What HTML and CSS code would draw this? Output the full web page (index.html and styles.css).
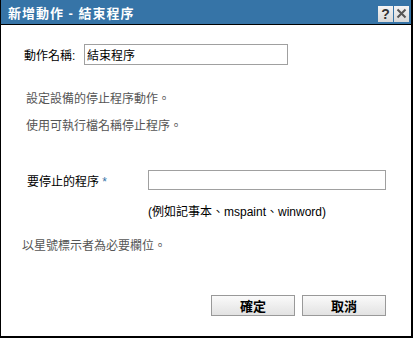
FILE: index.html
```html
<!DOCTYPE html>
<html lang="zh-Hant">
<head>
  <meta charset="UTF-8">
  <title>新增動作 - 結束程序</title>
  <link rel="stylesheet" href="styles.css">
</head>
<body>
  <div class="dialog">
    <div class="title-bar">
      <span class="title">新增動作 - 結束程序</span>
      <div class="title-btns">
        <span class="tbtn">?</span>
        <span class="tbtn">
          <svg width="11" height="11" viewBox="0 0 11 11"><path d="M1.5 1.5 L9.5 9.5 M9.5 1.5 L1.5 9.5" stroke="#555" stroke-width="2"/></svg>
        </span>
      </div>
    </div>

    <div class="content">
      <div class="name-row">
        <label for="actionName">動作名稱:</label>
        <input type="text" id="actionName" value="結束程序">
      </div>

      <p class="desc">設定設備的停止程序動作。</p>
      <p class="desc second">使用可執行檔名稱停止程序。</p>

      <div class="proc-row">
        <label for="procName">要停止的程序 <span class="req">*</span></label>
        <input type="text" id="procName">
      </div>
      <div class="hint">(例如記事本、mspaint、winword)</div>

      <p class="note">以星號標示者為必要欄位。</p>

      <div class="actions">
        <button class="btn">確定</button>
        <button class="btn">取消</button>
      </div>
    </div>
  </div>
</body>
</html>
```

FILE: styles.css
```css
/* General styling */
body {
  margin: 0;
  font-family: "Liberation Sans", "Noto Sans CJK TC", sans-serif;
  font-size: 12px;
  color: #000;
  background: #fff;
}
.dialog {
  width: 410px;
  height: 336px;
  border-left: 1px solid #000;
  border-right: 2px solid #000;
  border-bottom: 2px solid #000;
  display: flex;
  flex-direction: column;
}
.title-bar {
  height: 24px;
  background-color: #3674a7;
  border-bottom: 1px solid #000;
  display: flex;
  align-items: center;
  justify-content: space-between;
  padding: 0 2px 0 7px;
}
.title {
  color: #fff;
  font-weight: bold;
  font-size: 13px;
  letter-spacing: 1px;
}
.title-btns {
  display: flex;
  gap: 1px;
  margin-top: 3px;
}
.tbtn {
  width: 15px;
  height: 16px;
  background: linear-gradient(#f4f4f4, #d8d8d8);
  color: #333;
  font-weight: bold;
  font-size: 14px;
  display: flex;
  align-items: center;
  justify-content: center;
}
.content {
  flex: 1;
  padding: 19px 0 0 0;
}
.name-row {
  display: flex;
  align-items: center;
  padding-left: 23px;
}
.name-row label {
  width: 60px;
}
.name-row input {
  width: 198px;
  height: 17px;
  padding: 1px 2px;
  border: 1px solid #a0a0a0;
  font-family: inherit;
  font-size: 12px;
}
.desc {
  margin: 26px 0 0 25px;
  color: #555;
  line-height: 16px;
}
.desc.second {
  margin-top: 11px;
}
.proc-row {
  display: flex;
  align-items: center;
  margin-top: 36px;
  padding-left: 26px;
}
.proc-row label {
  width: 121px;
}
.req {
  color: #3674a7;
}
.proc-row input {
  width: 232px;
  height: 16px;
  padding: 1px 2px;
  border: 1px solid #a0a0a0;
  font-family: inherit;
  font-size: 12px;
}
.hint {
  margin: 14px 0 0 147px;
  line-height: 16px;
}
.note {
  margin: 18px 0 0 21px;
  color: #555;
  line-height: 16px;
}
.actions {
  display: flex;
  justify-content: flex-end;
  gap: 7px;
  margin-top: 41px;
  padding-right: 25px;
}
.btn {
  width: 84px;
  height: 21px;
  border: 1px solid #999;
  background: linear-gradient(#fafafa, #e2e2e2);
  font-family: inherit;
  font-weight: bold;
  font-size: 13px;
  padding: 0;
  cursor: pointer;
}
```
